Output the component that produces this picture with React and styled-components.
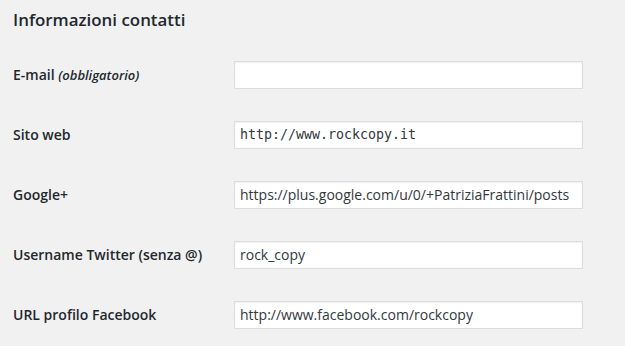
import React from 'react';
import styled, { createGlobalStyle } from 'styled-components';

const GlobalStyle = createGlobalStyle`
  html, body {
    margin: 0;
    padding: 0;
    background: #f1f1f1;
  }
  body {
    font-family: "Open Sans", sans-serif;
    font-size: 14px;
    color: #23282d;
  }
`;

export const Page = styled.div`
  width: 625px;
  height: 346px;
  padding: 0 13px;
  box-sizing: border-box;
  overflow: hidden;
`;

export const Heading = styled.h2`
  margin: 0;
  padding-top: 9px;
  font-size: 16.9px;
  font-weight: 600;
  line-height: 1.3;
  color: #23282d;
`;

export const FormTable = styled.div`
  display: flex;
  flex-direction: column;
  margin-top: 14px;
`;

export const Row = styled.div`
  display: grid;
  grid-template-columns: 221px 349px;
  align-items: center;
  height: 60px;
`;

export const Label = styled.label`
  font-size: 14px;
  font-weight: 600;
  line-height: 1.3;
  color: #23282d;
`;

export const Note = styled.span`
  font-style: italic;
  font-size: 13px;
`;

export const Field = styled.input`
  box-sizing: border-box;
  width: 349px;
  height: 28px;
  margin: 0;
  padding: 0 5px;
  border: 1px solid #ddd;
  border-radius: 0;
  background: #fff;
  box-shadow: inset 0 1px 2px rgba(0, 0, 0, 0.07);
  color: #32373c;
  font-family: ${({ $code }) => ($code ? '"DejaVu Sans Mono", monospace' : '"Open Sans", sans-serif')};
  font-size: ${({ $code }) => ($code ? '13.3px' : '14px')};
  outline: none;
`;

const fields = [
  { id: 'email', label: 'E-mail', note: '(obbligatorio)', value: '' },
  { id: 'url', label: 'Sito web', value: 'http://www.rockcopy.it', code: true },
  { id: 'googleplus', label: 'Google+', value: 'https://plus.google.com/u/0/+PatriziaFrattini/posts' },
  { id: 'twitter', label: 'Username Twitter (senza @)', value: 'rock_copy' },
  { id: 'facebook', label: 'URL profilo Facebook', value: 'http://www.facebook.com/rockcopy' },
];

const App = () => (
  <Page>
    <GlobalStyle />
    <Heading>Informazioni contatti</Heading>
    <FormTable>
      {fields.map((f) => (
        <Row key={f.id}>
          <Label htmlFor={f.id}>
            {f.label}
            {f.note && <> <Note>{f.note}</Note></>}
          </Label>
          <Field id={f.id} type="text" defaultValue={f.value} $code={f.code} />
        </Row>
      ))}
    </FormTable>
  </Page>
);

export default App;
